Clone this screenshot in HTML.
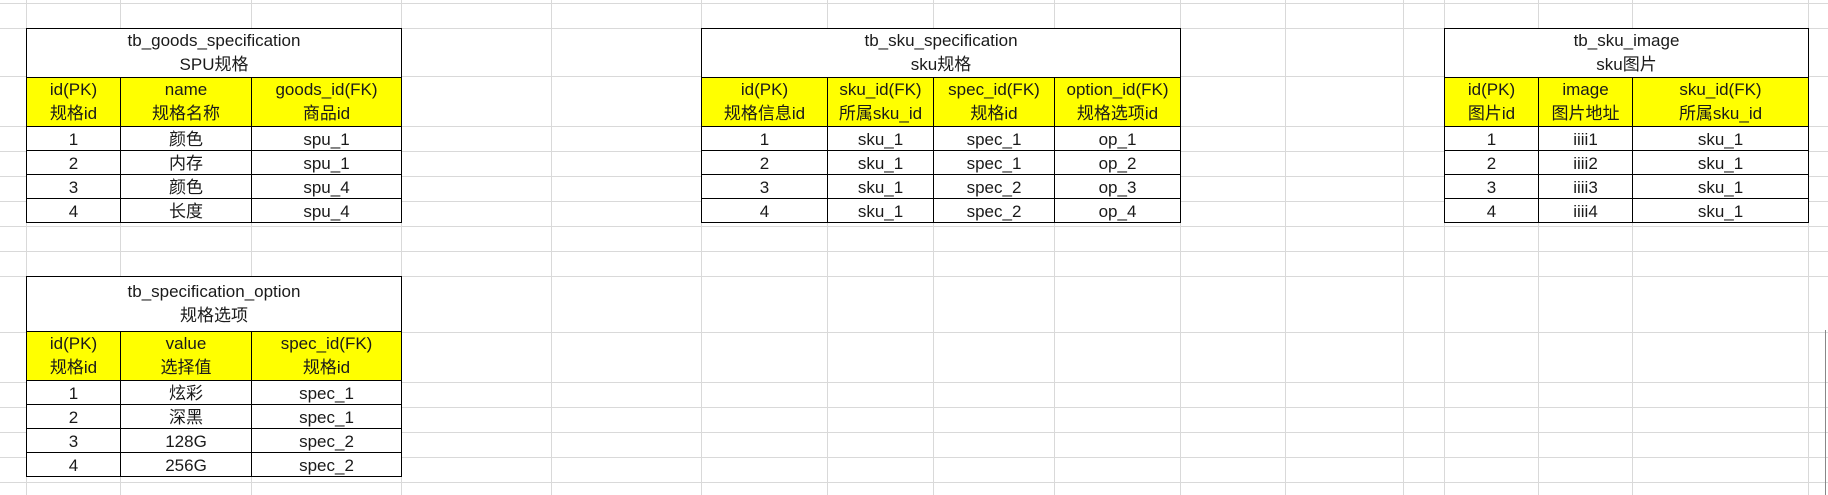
<!DOCTYPE html>
<html><head><meta charset="utf-8"><style>
html,body{margin:0;padding:0;}
body{width:1828px;height:495px;position:relative;overflow:hidden;background:#fff;font-family:"Liberation Sans","Noto Sans CJK SC",sans-serif;}
.h{position:absolute;left:0;width:1828px;height:1px;background:#d9d9d9;}
.v{position:absolute;top:0;height:495px;width:1px;background:#d9d9d9;}
table{position:absolute;border-collapse:collapse;table-layout:fixed;background:#fff;}
td{border:1.5px solid #000;padding:0;text-align:center;font-size:17px;line-height:24px;color:#1a1a1a;white-space:nowrap;overflow:hidden;}
tr.t td{height:46px;}
tr.y td{background:#ffff00;height:48px;}
tr.d td{height:21px;line-height:21px;padding-top:2px;}
</style></head><body>
<div class="h" style="top:3px"></div><div class="h" style="top:28px"></div><div class="h" style="top:76px"></div><div class="h" style="top:126px"></div><div class="h" style="top:151px"></div><div class="h" style="top:176px"></div><div class="h" style="top:201px"></div><div class="h" style="top:226px"></div><div class="h" style="top:251px"></div><div class="h" style="top:276px"></div><div class="h" style="top:332px"></div><div class="h" style="top:382px"></div><div class="h" style="top:407px"></div><div class="h" style="top:432px"></div><div class="h" style="top:457px"></div><div class="h" style="top:482px"></div>
<div class="v" style="left:26px"></div><div class="v" style="left:120px"></div><div class="v" style="left:251px"></div><div class="v" style="left:401px"></div><div class="v" style="left:551px"></div><div class="v" style="left:701px"></div><div class="v" style="left:827px"></div><div class="v" style="left:933px"></div><div class="v" style="left:1054px"></div><div class="v" style="left:1180px"></div><div class="v" style="left:1285px"></div><div class="v" style="left:1403px"></div><div class="v" style="left:1444px"></div><div class="v" style="left:1538px"></div><div class="v" style="left:1632px"></div><div class="v" style="left:1808px"></div>
<div style="position:absolute;left:1825px;top:330px;width:1px;height:165px;background:#888"></div>

<table style="left:26px;top:28px;width:375px">
<colgroup><col style="width:94px"><col style="width:131px"><col style="width:150px"></colgroup>
<tr class="t"><td colspan="3">tb_goods_specification<br>SPU规格</td></tr>
<tr class="y"><td>id(PK)<br>规格id</td><td>name<br>规格名称</td><td>goods_id(FK)<br>商品id</td></tr>
<tr class="d"><td>1</td><td>颜色</td><td>spu_1</td></tr>
<tr class="d"><td>2</td><td>内存</td><td>spu_1</td></tr>
<tr class="d"><td>3</td><td>颜色</td><td>spu_4</td></tr>
<tr class="d"><td>4</td><td>长度</td><td>spu_4</td></tr>
</table>

<table style="left:26px;top:276px;width:375px">
<colgroup><col style="width:94px"><col style="width:131px"><col style="width:150px"></colgroup>
<tr class="t"><td colspan="3" style="height:54px;padding-top:0">tb_specification_option<br>规格选项</td></tr>
<tr class="y"><td>id(PK)<br>规格id</td><td>value<br>选择值</td><td>spec_id(FK)<br>规格id</td></tr>
<tr class="d"><td>1</td><td>炫彩</td><td>spec_1</td></tr>
<tr class="d"><td>2</td><td>深黑</td><td>spec_1</td></tr>
<tr class="d"><td>3</td><td>128G</td><td>spec_2</td></tr>
<tr class="d"><td>4</td><td>256G</td><td>spec_2</td></tr>
</table>

<table style="left:701px;top:28px;width:479px">
<colgroup><col style="width:126px"><col style="width:106px"><col style="width:121px"><col style="width:126px"></colgroup>
<tr class="t"><td colspan="4">tb_sku_specification<br>sku规格</td></tr>
<tr class="y"><td>id(PK)<br>规格信息id</td><td>sku_id(FK)<br>所属sku_id</td><td>spec_id(FK)<br>规格id</td><td>option_id(FK)<br>规格选项id</td></tr>
<tr class="d"><td>1</td><td>sku_1</td><td>spec_1</td><td>op_1</td></tr>
<tr class="d"><td>2</td><td>sku_1</td><td>spec_1</td><td>op_2</td></tr>
<tr class="d"><td>3</td><td>sku_1</td><td>spec_2</td><td>op_3</td></tr>
<tr class="d"><td>4</td><td>sku_1</td><td>spec_2</td><td>op_4</td></tr>
</table>

<table style="left:1444px;top:28px;width:364px">
<colgroup><col style="width:94px"><col style="width:94px"><col style="width:176px"></colgroup>
<tr class="t"><td colspan="3">tb_sku_image<br>sku图片</td></tr>
<tr class="y"><td>id(PK)<br>图片id</td><td>image<br>图片地址</td><td>sku_id(FK)<br>所属sku_id</td></tr>
<tr class="d"><td>1</td><td>iiii1</td><td>sku_1</td></tr>
<tr class="d"><td>2</td><td>iiii2</td><td>sku_1</td></tr>
<tr class="d"><td>3</td><td>iiii3</td><td>sku_1</td></tr>
<tr class="d"><td>4</td><td>iiii4</td><td>sku_1</td></tr>
</table>
</body></html>
